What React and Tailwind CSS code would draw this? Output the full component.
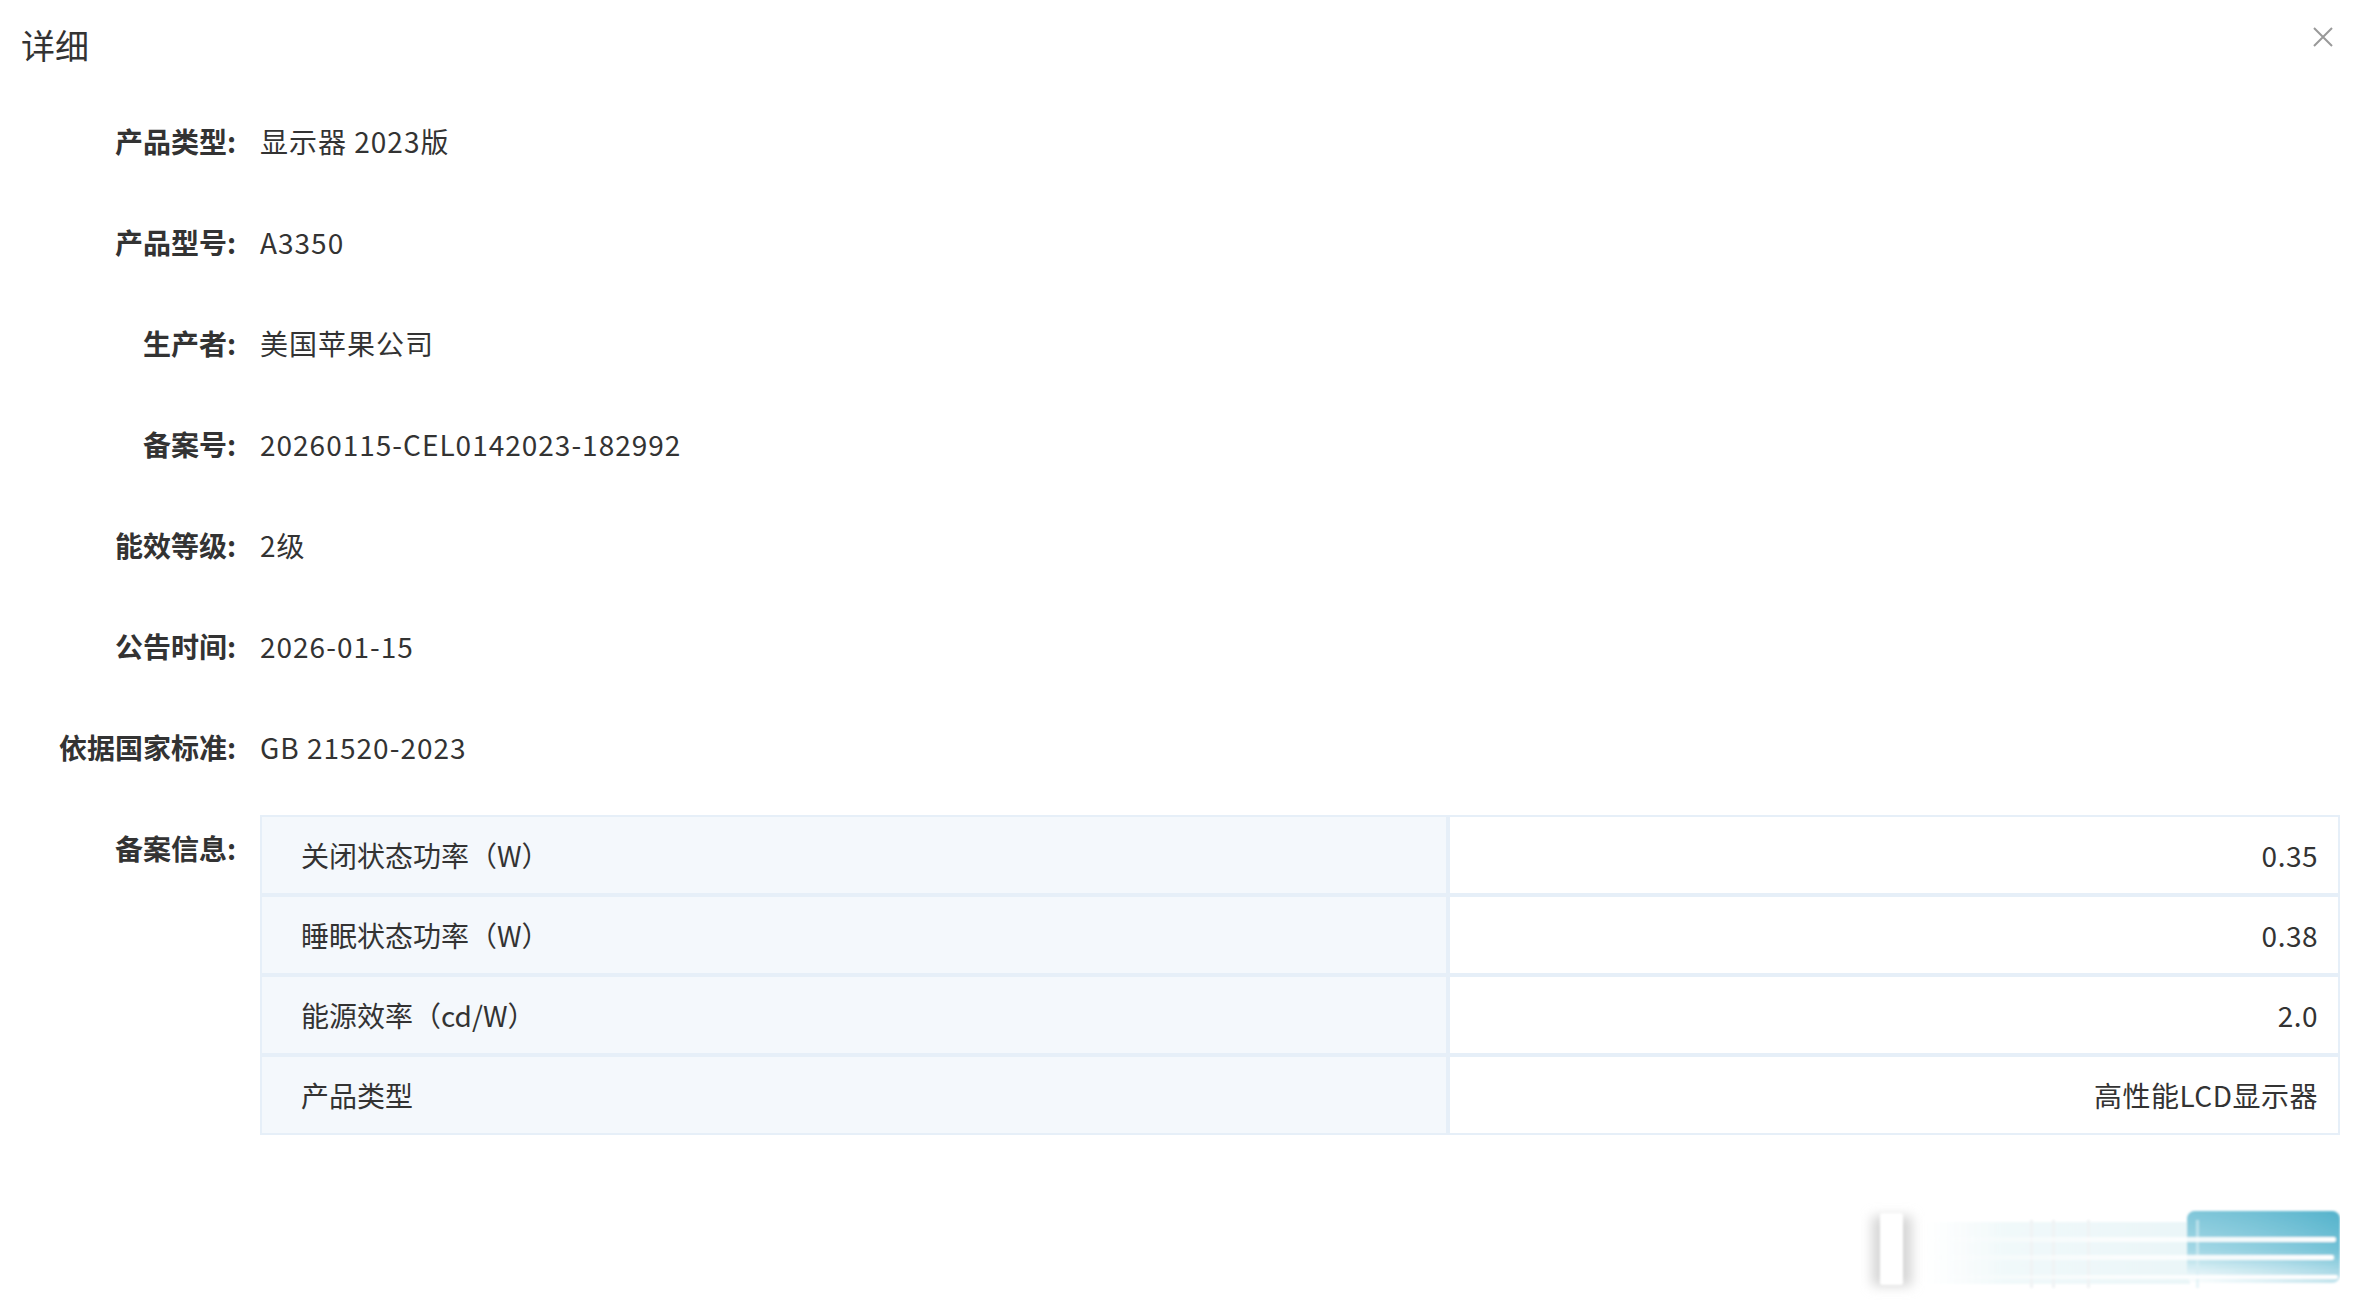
import React from "react";

/* ===== données ===== */
const FIELDS = [
  { label: "产品类型", value: "显示器 2023版" },
  { label: "产品型号", value: "A3350" },
  { label: "生产者", value: "美国苹果公司" },
  { label: "备案号", value: "20260115-CEL0142023-182992" },
  { label: "能效等级", value: "2级" },
  { label: "公告时间", value: "2026-01-15" },
  { label: "依据国家标准", value: "GB 21520-2023" },
];

const RECORDS = [
  { name: "关闭状态功率（W）", value: "0.35" },
  { name: "睡眠状态功率（W）", value: "0.38" },
  { name: "能源效率（cd/W）", value: "2.0" },
  { name: "产品类型", value: "高性能LCD显示器" },
];

const FONT = "font-['Microsoft_YaHei','Noto_Sans_CJK_SC',sans-serif]";

function CloseIcon() {
  return (
    <svg width="22" height="22" viewBox="0 0 22 22" fill="none">
      <path d="M2 2L20 20M20 2L2 20" stroke="#999" strokeWidth="2" />
    </svg>
  );
}

/* bas de page : boutons flous (capture abîmée) */
function FooterGhost() {
  return (
    <svg width="480" height="100" viewBox="0 0 480 100" fill="none">
      <defs>
        <linearGradient id="blue" x1="0" y1="0" x2="0" y2="1">
          <stop offset="0" stopColor="#55b3cc" />
          <stop offset="0.55" stopColor="#86cbdd" />
          <stop offset="1" stopColor="#ffffff" stopOpacity="0.9" />
        </linearGradient>
        <linearGradient id="blueSide" x1="0" y1="0" x2="1" y2="0">
          <stop offset="0" stopColor="#ffffff" stopOpacity="0.25" />
          <stop offset="1" stopColor="#4fb0ca" stopOpacity="0.35" />
        </linearGradient>
        <linearGradient id="band" x1="0" y1="0" x2="1" y2="0">
          <stop offset="0" stopColor="#f6fbfc" stopOpacity="0" />
          <stop offset="0.3" stopColor="#f1f9fa" />
          <stop offset="1" stopColor="#eaf6f8" />
        </linearGradient>
        <linearGradient id="streak" x1="0" y1="0" x2="1" y2="0">
          <stop offset="0" stopColor="#ffffff" stopOpacity="0" />
          <stop offset="0.5" stopColor="#ffffff" stopOpacity="0.8" />
          <stop offset="1" stopColor="#ffffff" />
        </linearGradient>
        <filter id="soft" x="-10%" y="-20%" width="120%" height="140%">
          <feGaussianBlur stdDeviation="1.2" />
        </filter>
        <filter id="shadow" x="-50%" y="-20%" width="200%" height="140%">
          <feGaussianBlur stdDeviation="6" />
        </filter>
      </defs>
      <g filter="url(#soft)">
        <rect x="60" y="22" width="270" height="62" fill="url(#band)" />
        <rect x="327" y="11" width="153" height="72" rx="8" fill="url(#blue)" />
        <rect x="327" y="11" width="153" height="72" rx="8" fill="url(#blueSide)" />
        <rect x="170" y="20" width="3" height="68" fill="#f0f3f4" />
        <rect x="192" y="20" width="3" height="68" fill="#f0f3f4" />
        <rect x="227" y="20" width="3" height="68" fill="#f0f3f4" />
        <rect x="336" y="20" width="3" height="68" fill="#d9eef4" opacity="0.6" />
        <rect x="60" y="37" width="416" height="5" rx="2" fill="url(#streak)" />
        <rect x="60" y="55" width="414" height="5" rx="2" fill="url(#streak)" />
        <rect x="60" y="75" width="418" height="4" rx="2" fill="url(#streak)" />
      </g>
      <rect x="12" y="16" width="40" height="70" fill="#d6d6d6" filter="url(#shadow)" />
      <rect x="20" y="13" width="23" height="72" rx="2" fill="#ffffff" filter="url(#soft)" />
    </svg>
  );
}

export default function App() {
  return (
    <div className={`min-h-screen w-full bg-white text-[#333] ${FONT}`}>
      {/* en-tête */}
      <div className="flex h-[90px] items-center justify-between pl-[21px] pr-[24px]">
        <h2 className="text-[34px] font-normal leading-none text-[#333]">详细</h2>
        <div className="-mt-[16px]">
          <CloseIcon />
        </div>
      </div>

      <div className="pr-[18px]">
        {FIELDS.map((f) => (
          <div key={f.label} className="flex h-[101px] items-center">
            <div className="w-[236px] shrink-0 text-right text-[28px] font-bold text-[#333]">
              {f.label}:
            </div>
            <div className="pl-[24px] text-[28px] tracking-[1px] text-[#333]">{f.value}</div>
          </div>
        ))}

        <div className="mt-[18px] flex items-start">
          <div className="w-[236px] shrink-0 pt-[13px] text-right text-[28px] font-bold leading-[40px] text-[#333]">
            备案信息:
          </div>
          <div className="ml-[24px] grid flex-1 grid-cols-[1188px_1fr]">
            {RECORDS.map((r) => (
              <React.Fragment key={r.name}>
                <div className="flex h-[80px] items-center border-2 border-[#e6eff8] bg-[#f4f8fc] pl-[39px] text-[28px] text-[#333]">
                  {r.name}
                </div>
                <div className="flex h-[80px] items-center justify-end border-2 border-[#e6eff8] bg-white pr-[20px] text-[28px] tracking-[0.5px] text-[#333]">
                  {r.value}
                </div>
              </React.Fragment>
            ))}
          </div>
        </div>

        <div className="mt-[65px] flex justify-end">
          <FooterGhost />
        </div>
      </div>
    </div>
  );
}
